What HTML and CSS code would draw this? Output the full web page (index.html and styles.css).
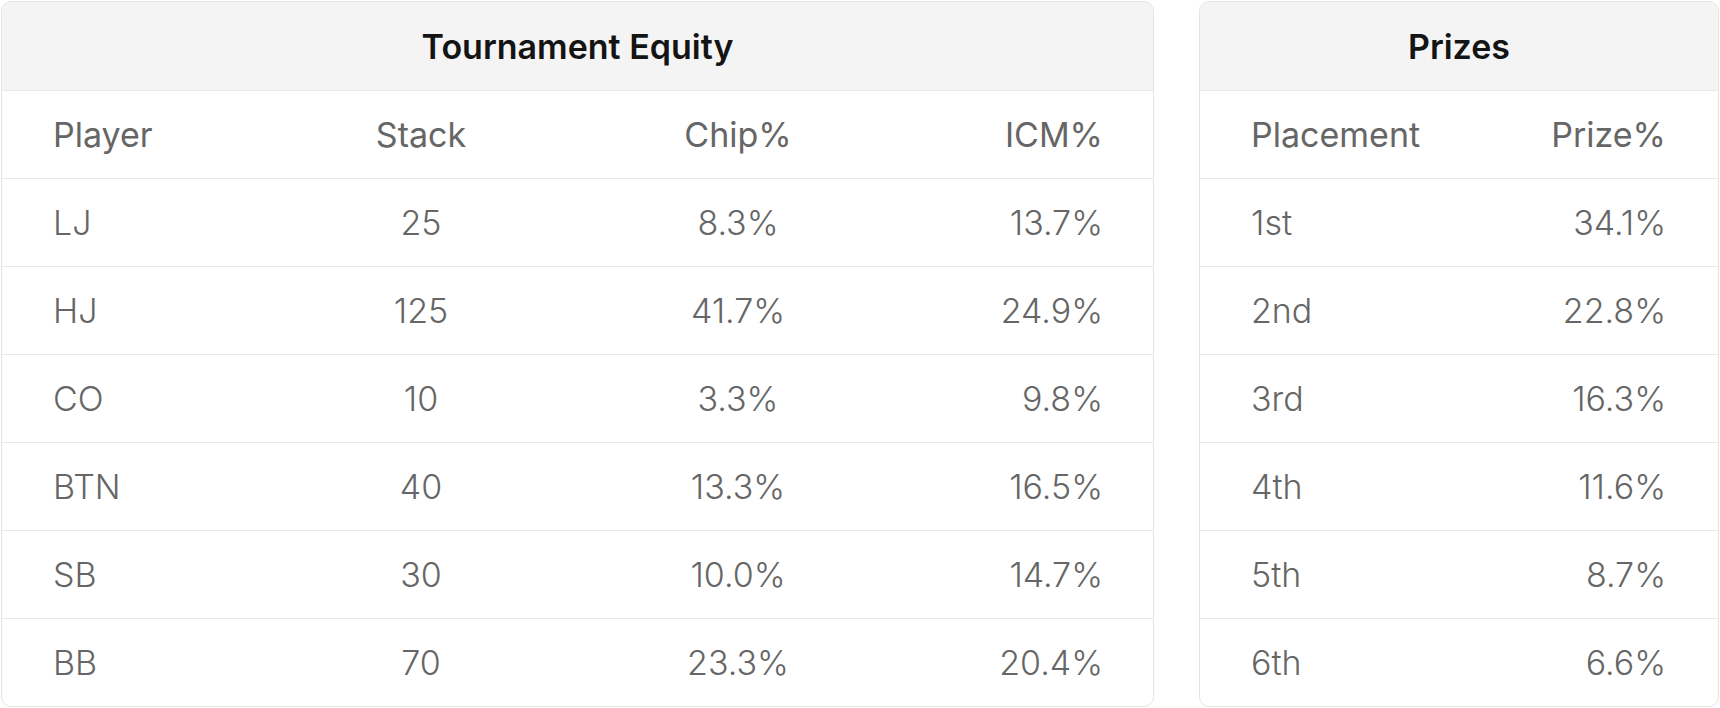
FILE: index.html
```html
<!DOCTYPE html>
<html>
<head>
<meta charset="utf-8">
<link rel="stylesheet" href="styles.css">
</head>
<body>
<div class="layout">
  <section class="card equity">
    <div class="card-title">Tournament Equity</div>
    <div class="row head">
      <div class="c-left">Player</div>
      <div class="c-center">Stack</div>
      <div class="c-center">Chip%</div>
      <div class="c-right">ICM%</div>
    </div>
    <div class="row"><div class="c-left">LJ</div><div class="c-center">25</div><div class="c-center">8.3%</div><div class="c-right">13.7%</div></div>
    <div class="row"><div class="c-left">HJ</div><div class="c-center">125</div><div class="c-center">41.7%</div><div class="c-right">24.9%</div></div>
    <div class="row"><div class="c-left">CO</div><div class="c-center">10</div><div class="c-center">3.3%</div><div class="c-right">9.8%</div></div>
    <div class="row"><div class="c-left">BTN</div><div class="c-center">40</div><div class="c-center">13.3%</div><div class="c-right">16.5%</div></div>
    <div class="row"><div class="c-left">SB</div><div class="c-center">30</div><div class="c-center">10.0%</div><div class="c-right">14.7%</div></div>
    <div class="row"><div class="c-left">BB</div><div class="c-center">70</div><div class="c-center">23.3%</div><div class="c-right">20.4%</div></div>
  </section>
  <section class="card prizes">
    <div class="card-title">Prizes</div>
    <div class="row head">
      <div class="c-left">Placement</div>
      <div class="c-right">Prize%</div>
    </div>
    <div class="row"><div class="c-left">1st</div><div class="c-right">34.1%</div></div>
    <div class="row"><div class="c-left">2nd</div><div class="c-right">22.8%</div></div>
    <div class="row"><div class="c-left">3rd</div><div class="c-right">16.3%</div></div>
    <div class="row"><div class="c-left">4th</div><div class="c-right">11.6%</div></div>
    <div class="row"><div class="c-left">5th</div><div class="c-right">8.7%</div></div>
    <div class="row"><div class="c-left">6th</div><div class="c-right">6.6%</div></div>
  </section>
</div>
</body>
</html>
```

FILE: styles.css
```css
html, body {
  margin: 0;
  padding: 0;
  background: #ffffff;
}

body {
  padding: 1px;
  font-family: Inter, "Noto Sans", sans-serif;
  color: #666666;
  font-variant-numeric: proportional-nums;
  font-feature-settings: "pnum" 1, "tnum" 0;
}

.layout {
  display: grid;
  grid-template-columns: 1153px 520px;
  column-gap: 45px;
  align-items: start;
}

.card {
  border: 1px solid #e4e4e4;
  border-radius: 10px;
  overflow: hidden;
  background: #ffffff;
}

.card-title {
  height: 88px;
  display: flex;
  align-items: center;
  justify-content: center;
  background: #f4f4f4;
  color: #141414;
  font-size: 34px;
  font-weight: 600;
}

.row {
  display: grid;
  align-items: center;
  height: 87px;
  border-top: 1px solid #e8e8e8;
  padding: 0 50px 0 51px;
  font-size: 34px;
  font-weight: 300;
}

.row.head {
  font-weight: 400;
}

.equity .row {
  grid-template-columns: 256px 224px 410px 1fr;
}

.prizes .row {
  grid-template-columns: 1fr 1fr;
  padding-right: 52px;
}

.c-left { text-align: left; }
.c-center { text-align: center; }
.c-right { text-align: right; }
```
